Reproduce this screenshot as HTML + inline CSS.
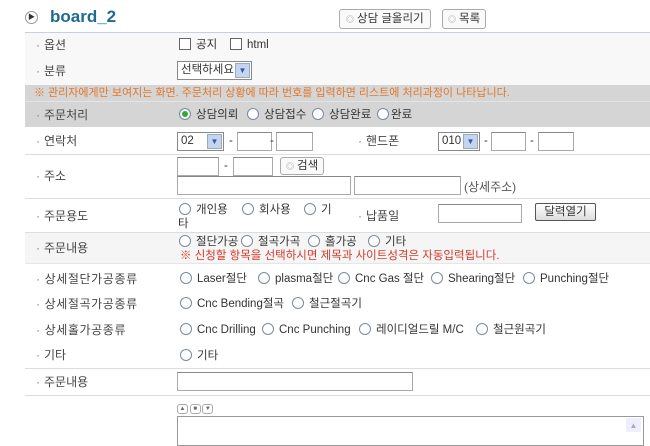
<!DOCTYPE html>
<html><head><meta charset="utf-8"><style>
*{margin:0;padding:0;box-sizing:border-box}
body{width:650px;height:439px;background:#fff;font-family:"Liberation Sans","Noto Sans CJK KR",sans-serif;font-size:11.5px;color:#333;position:relative;overflow:hidden}
.a{position:absolute;white-space:nowrap;line-height:15px}
.l{position:absolute;left:36px;color:#444;font-size:12px;line-height:15px}
.l:before{content:"·";margin-right:4px;color:#777}
.hr{position:absolute;left:25px;right:0;height:1px;background:#ddd}
.in{position:absolute;border:1px solid #aaa;border-top-color:#888;background:#fff;height:19px}
.r{display:inline-block;width:12px;height:12px;border:1px solid #7a8aa0;border-radius:50%;vertical-align:-2px;margin-right:5px;background:#fff}
.c{display:inline-block;width:12px;height:12px;border:1px solid #666;vertical-align:-2px;margin-right:5px;background:#fff}
.sel{position:absolute;border:1px solid #888;background:#fff;height:19px;padding:1px 3px;font-size:11.5px;line-height:15px}
.arr{position:absolute;right:1px;top:1px;width:15px;height:15px;background:#c5d5ef;border:1px solid #9ab;color:#2a5db0;font-size:8px;text-align:center;line-height:14px}
.btn{position:absolute;border:1px solid #aaa;border-radius:3px;background:#fafafa;font-size:11.5px;padding:0 5px;height:19px;line-height:17px}
.btn i{font-style:normal;color:#999;font-size:8px;margin-right:3px}
</style></head><body>
<div class="a" style="left:25px;top:11px;width:13px;height:13px;border:1px solid #999;border-radius:50%;font-size:7px;text-align:center;line-height:11px;color:#333">▶</div>
<div class="a" style="left:50px;top:7px;font-size:17px;line-height:20px;font-weight:bold;color:#1d6b91">board_2</div>
<div class="btn" style="left:339px;top:9px;height:20px;line-height:18px;padding:0 6px"><i>◎</i>상담 글올리기</div>
<div class="btn" style="left:442px;top:9px;height:20px;line-height:18px"><i>◎</i>목록</div>
<div class="hr" style="top:32px;background:#c8d0dc"></div>
<div class="a" style="left:25px;top:33px;width:625px;height:52px;background:#f8f8f8"></div>
<div class="l" style="top:38px">옵션</div>
<div class="a" style="left:179px;top:38px"><span class="c"></span>공지</div>
<div class="a" style="left:230px;top:38px"><span class="c"></span>html</div>
<div class="l" style="top:64px">분류</div>
<div class="sel" style="left:177px;top:61px;width:75px">선택하세요<span class="arr">▼</span></div>
<div class="a" style="left:25px;top:85px;width:625px;height:42px;background:#d5d5d5"></div>
<div class="a" style="left:34px;top:86px;color:#e0782a;font-size:11px">※ 관리자에게만 보여지는 화면. 주문처리 상황에 따라 번호를 입력하면 리스트에 처리과정이 나타납니다.</div>
<div class="hr" style="top:101px;background:#e4e4e4"></div>
<div class="l" style="top:108px">주문처리</div>
<div class="a" style="left:179px;top:108px"><span class="r" style="box-shadow:inset 0 0 0 2px #fff;background:#3a3"></span>상담의뢰</div>
<div class="a" style="left:247px;top:108px"><span class="r"></span>상담접수</div>
<div class="a" style="left:312px;top:108px"><span class="r"></span>상담완료</div>
<div class="a" style="left:377px;top:108px"><span class="r" style="margin-right:2px"></span>완료</div>
<div class="l" style="top:134px">연락처</div>
<div class="sel" style="left:177px;top:132px;width:47px">02<span class="arr">▼</span></div>
<div class="a" style="left:229px;top:134px">-</div>
<div class="in" style="left:237px;top:132px;width:35px"></div>
<div class="a" style="left:270px;top:134px">-</div>
<div class="in" style="left:276px;top:132px;width:37px"></div>
<div class="l" style="left:358px;top:134px">핸드폰</div>
<div class="sel" style="left:438px;top:132px;width:42px">010<span class="arr">▼</span></div>
<div class="a" style="left:484px;top:134px">-</div>
<div class="in" style="left:491px;top:132px;width:35px"></div>
<div class="a" style="left:530px;top:134px">-</div>
<div class="in" style="left:538px;top:132px;width:36px"></div>
<div class="hr" style="top:154px"></div>
<div class="in" style="left:177px;top:157px;width:42px"></div>
<div class="a" style="left:224px;top:159px">-</div>
<div class="in" style="left:233px;top:157px;width:40px"></div>
<div class="btn" style="left:280px;top:157px;height:18px;line-height:16px"><i>◎</i>검색</div>
<div class="l" style="top:169px">주소</div>
<div class="in" style="left:177px;top:176px;width:174px"></div>
<div class="in" style="left:354px;top:176px;width:107px"></div>
<div class="a" style="left:464px;top:180px;color:#555;font-size:12px">(상세주소)</div>
<div class="hr" style="top:198px"></div>
<div class="l" style="top:209px">주문용도</div>
<div class="a" style="left:179px;top:203px"><span class="r"></span>개인용</div>
<div class="a" style="left:242px;top:203px"><span class="r"></span>회사용</div>
<div class="a" style="left:304px;top:203px"><span class="r"></span>기</div>
<div class="a" style="left:178px;top:217px">타</div>
<div class="l" style="left:358px;top:209px">납품일</div>
<div class="in" style="left:438px;top:204px;width:84px"></div>
<div class="a" style="left:535px;top:203px;width:61px;height:18px;border:1px solid #555;border-radius:2px;background:linear-gradient(#fff,#ddd);text-align:center;line-height:16px">달력열기</div>
<div class="hr" style="top:232px"></div>
<div class="a" style="left:25px;top:233px;width:625px;height:30px;background:#f5f5f5"></div>
<div class="l" style="top:241px">주문내용</div>
<div class="a" style="left:179px;top:235px"><span class="r"></span>절단가공</div>
<div class="a" style="left:241px;top:235px"><span class="r"></span>절곡가곡</div>
<div class="a" style="left:308px;top:235px"><span class="r"></span>홀가공</div>
<div class="a" style="left:368px;top:235px"><span class="r"></span>기타</div>
<div class="a" style="left:180px;top:249px;color:#d43a2a;font-size:11.5px">※ 신청할 항목을 선택하시면 제목과 사이트성격은 자동입력됩니다.</div>
<div class="hr" style="top:263px;background:#e6e6e6"></div>
<div class="l" style="top:272px;letter-spacing:0.6px">상세절단가공종류</div>
<div class="a" style="left:180px;top:272px"><span class="r"></span>Laser절단</div>
<div class="a" style="left:258px;top:272px"><span class="r"></span>plasma절단</div>
<div class="a" style="left:338px;top:272px"><span class="r"></span>Cnc Gas 절단</div>
<div class="a" style="left:431px;top:272px"><span class="r"></span>Shearing절단</div>
<div class="a" style="left:523px;top:272px"><span class="r"></span>Punching절단</div>
<div class="l" style="top:297px;letter-spacing:0.6px">상세절곡가공종류</div>
<div class="a" style="left:180px;top:297px"><span class="r"></span>Cnc Bending절곡</div>
<div class="a" style="left:292px;top:297px"><span class="r"></span>철근절곡기</div>
<div class="l" style="top:323px;letter-spacing:0.6px">상세홀가공종류</div>
<div class="a" style="left:180px;top:323px"><span class="r"></span>Cnc Drilling</div>
<div class="a" style="left:262px;top:323px"><span class="r"></span>Cnc Punching</div>
<div class="a" style="left:359px;top:323px"><span class="r"></span>레이디얼드릴 M/C</div>
<div class="a" style="left:476px;top:323px"><span class="r"></span>철근원곡기</div>
<div class="l" style="top:348px">기타</div>
<div class="a" style="left:180px;top:349px"><span class="r"></span>기타</div>
<div class="hr" style="top:368px"></div>
<div class="l" style="top:375px">주문내용</div>
<div class="in" style="left:177px;top:372px;width:236px"></div>
<div class="hr" style="top:395px"></div>
<div class="a" style="left:177px;top:402px;font-size:6px;color:#666">
<span style="display:inline-block;width:11px;height:10px;border:1px solid #aaa;border-radius:3px;text-align:center;line-height:8px">▲</span>
<span style="display:inline-block;width:11px;height:10px;border:1px solid #aaa;border-radius:3px;text-align:center;line-height:8px">■</span>
<span style="display:inline-block;width:11px;height:10px;border:1px solid #aaa;border-radius:3px;text-align:center;line-height:8px">▼</span></div>
<div class="a" style="left:177px;top:416px;width:467px;height:30px;border:1px solid #999;background:#fff"></div>
<div class="a" style="left:626px;top:418px;width:15px;height:14px;background:#eef;color:#aab;font-size:8px;text-align:center">▲</div>
</body></html>
